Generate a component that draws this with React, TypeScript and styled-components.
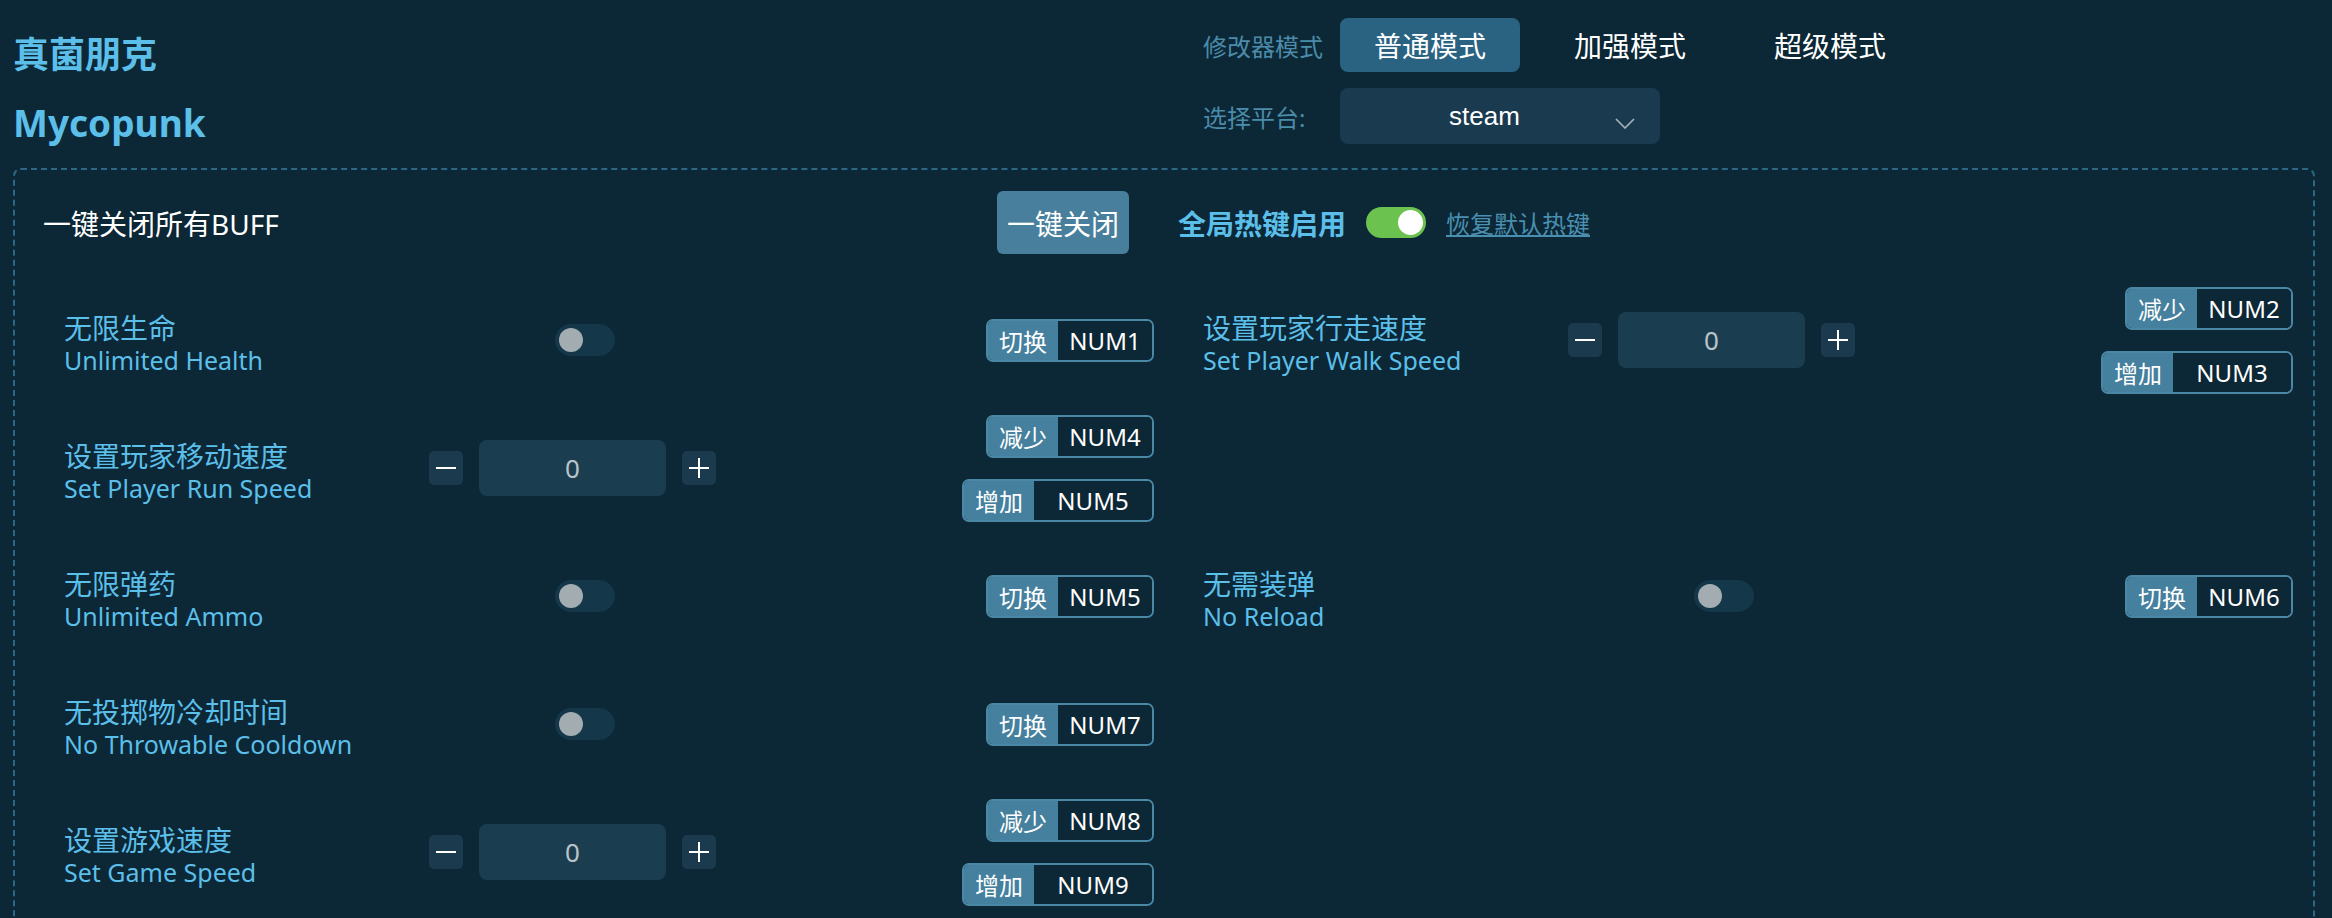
import React from 'react';
import styled, { createGlobalStyle } from 'styled-components';

const Global = createGlobalStyle`
  html, body { margin: 0; padding: 0; background: #0c2735; overflow: hidden; }
  body { font-family: "Noto Sans", "Noto Sans CJK SC", sans-serif; color: #fff; }
  * { box-sizing: border-box; }
`;

const Page = styled.div`
  width: 2332px;
  padding: 18px 17px 0 13px;
`;

const Header = styled.header`
  display: flex;
  align-items: flex-start;
`;

const TitleBlock = styled.div`
  width: 1190px;
  padding-top: 12px;
`;

const TitleCn = styled.h1`
  margin: 0;
  font-size: 36px;
  line-height: 50px;
  font-weight: 700;
  color: #5bbfe9;
`;

const TitleEn = styled.h2`
  margin: 18px 0 0;
  font-size: 37px;
  line-height: 50px;
  font-weight: 700;
  color: #5bbfe9;
`;

const Controls = styled.div`
  display: flex;
  flex-direction: column;
  gap: 16px;
`;

const ControlRow = styled.div`
  display: flex;
  align-items: center;
`;

const ControlLabel = styled.span`
  width: 137px;
  font-size: 24px;
  color: #4b8cab;
`;

const ModeGroup = styled.div`
  display: flex;
  gap: 20px;
`;

const ModeButton = styled.button<{ $active?: boolean }>`
  width: 180px;
  height: 54px;
  border: 0;
  border-radius: 8px;
  padding: 0;
  background: ${(p) => (p.$active ? '#2a6382' : 'transparent')};
  color: #fff;
  font-family: inherit;
  font-size: 28px;
`;

const Select = styled.div`
  width: 320px;
  height: 56px;
  border-radius: 8px;
  background: #1a3b4f;
  display: flex;
  align-items: center;
  padding: 0 25px 0 14px;
`;

const SelectText = styled.span`
  flex: 1;
  text-align: center;
  font-family: "Liberation Sans", Arial, sans-serif;
  font-size: 26px;
  color: #fff;
`;

const Chevron = styled.svg`
  margin-top: 14px;
`;

const Panel = styled.section`
  margin-top: 20px;
  border: 2px dashed #2c6886;
  border-radius: 8px;
  padding: 21px 20px 40px 28px;
`;

const TopRow = styled.div`
  display: grid;
  grid-template-columns: 1fr 1fr;
  column-gap: 28px;
  height: 63px;
`;

const TopLeft = styled.div`
  display: flex;
  align-items: center;
  justify-content: space-between;
  padding-right: 25px;
`;

const TopText = styled.span`
  font-size: 28px;
  color: #fff;
`;

const CloseButton = styled.button`
  height: 63px;
  padding: 0 10px;
  border: 0;
  border-radius: 6px;
  background: #487f9c;
  color: #fff;
  font-family: inherit;
  font-size: 28px;
`;

const TopRight = styled.div`
  display: flex;
  align-items: center;
  gap: 20px;
  margin-left: -4px;
`;

const HotkeyTitle = styled.span`
  font-size: 28px;
  font-weight: 700;
  color: #5bbfe9;
`;

const ResetLink = styled.a`
  font-size: 24px;
  color: #4a8fb0;
  text-decoration: underline;
`;

const Grid = styled.div`
  margin-top: 32px;
  display: grid;
  grid-template-columns: 1fr 1fr;
  column-gap: 28px;
  row-gap: 20px;
`;

const Item = styled.div`
  display: flex;
  align-items: center;
  min-height: 108px;
  padding-left: 21px;
`;

const Label = styled.div`
  width: 365px;
  padding-top: 6px;
  display: flex;
  flex-direction: column;
  color: #5bbfe9;
`;

const LabelCn = styled.span`
  font-size: 28px;
  line-height: 34px;
`;

const LabelEn = styled.span`
  font-size: 25px;
  line-height: 30px;
`;

const Track = styled.div<{ $on?: boolean }>`
  width: 60px;
  height: ${(p) => (p.$on ? 31 : 32)}px;
  border-radius: 16px;
  background: ${(p) => (p.$on ? '#6cc24f' : '#15374a')};
  display: flex;
  align-items: center;
  justify-content: ${(p) => (p.$on ? 'flex-end' : 'flex-start')};
  padding: 0 ${(p) => (p.$on ? 3 : 4)}px;
`;

const Knob = styled.div<{ $on?: boolean }>`
  width: ${(p) => (p.$on ? 25 : 24)}px;
  height: ${(p) => (p.$on ? 25 : 24)}px;
  border-radius: 50%;
  background: ${(p) => (p.$on ? '#ffffff' : '#a3acb1')};
`;

const ToggleSlot = styled.div`
  margin-left: 126px;
`;

const Stepper = styled.div`
  display: flex;
  align-items: center;
  gap: 16px;
`;

const StepButton = styled.div`
  width: 34px;
  height: 34px;
  border-radius: 5px;
  background: #1b3a4d;
  display: flex;
  align-items: center;
  justify-content: center;
`;

const StepValue = styled.div`
  width: 187px;
  height: 56px;
  border-radius: 8px;
  background: #1b3d50;
  display: flex;
  align-items: center;
  justify-content: center;
  font-size: 26px;
  color: #b9c3c9;
`;

const Keys = styled.div`
  margin-left: auto;
  display: flex;
  flex-direction: column;
  align-items: flex-end;
  gap: 21px;
`;

const Hotkey = styled.div`
  display: flex;
  height: 43px;
  border: 2px solid #4a88a6;
  border-radius: 7px;
  overflow: hidden;
`;

const KeyLabel = styled.span`
  width: 70px;
  background: #45809e;
  display: flex;
  align-items: center;
  justify-content: center;
  font-size: 24px;
  color: #fff;
`;

const KeyValue = styled.span<{ $wide?: boolean }>`
  width: ${(p) => (p.$wide ? 118 : 94)}px;
  background: #0c2735;
  display: flex;
  align-items: center;
  justify-content: center;
  font-size: 24px;
  color: #fff;
`;

type Row =
  | { kind: 'toggle'; cn: string; en: string; key: string }
  | { kind: 'number'; cn: string; en: string; dec: string; inc: string }
  | null;

const rows: Row[] = [
  { kind: 'toggle', cn: '无限生命', en: 'Unlimited Health', key: 'NUM1' },
  { kind: 'number', cn: '设置玩家行走速度', en: 'Set Player Walk Speed', dec: 'NUM2', inc: 'NUM3' },
  { kind: 'number', cn: '设置玩家移动速度', en: 'Set Player Run Speed', dec: 'NUM4', inc: 'NUM5' },
  null,
  { kind: 'toggle', cn: '无限弹药', en: 'Unlimited Ammo', key: 'NUM5' },
  { kind: 'toggle', cn: '无需装弹', en: 'No Reload', key: 'NUM6' },
  { kind: 'toggle', cn: '无投掷物冷却时间', en: 'No Throwable Cooldown', key: 'NUM7' },
  null,
  { kind: 'number', cn: '设置游戏速度', en: 'Set Game Speed', dec: 'NUM8', inc: 'NUM9' },
];

const Toggle = ({ on }: { on?: boolean }) => (
  <Track $on={on}>
    <Knob $on={on} />
  </Track>
);

const Minus = () => (
  <svg width="20" height="20" viewBox="0 0 20 20">
    <line x1="0" y1="10" x2="20" y2="10" stroke="#fff" strokeWidth="2" />
  </svg>
);

const Plus = () => (
  <svg width="20" height="20" viewBox="0 0 20 20">
    <line x1="0" y1="10" x2="20" y2="10" stroke="#fff" strokeWidth="2" />
    <line x1="10" y1="0" x2="10" y2="20" stroke="#fff" strokeWidth="2" />
  </svg>
);

const RowItem = ({ row }: { row: Row }) => {
  if (!row) return <Item />;
  return (
    <Item>
      <Label>
        <LabelCn>{row.cn}</LabelCn>
        <LabelEn>{row.en}</LabelEn>
      </Label>
      {row.kind === 'toggle' ? (
        <>
          <ToggleSlot>
            <Toggle />
          </ToggleSlot>
          <Keys>
            <Hotkey>
              <KeyLabel>切换</KeyLabel>
              <KeyValue>{row.key}</KeyValue>
            </Hotkey>
          </Keys>
        </>
      ) : (
        <>
          <Stepper>
            <StepButton>
              <Minus />
            </StepButton>
            <StepValue>0</StepValue>
            <StepButton>
              <Plus />
            </StepButton>
          </Stepper>
          <Keys>
            <Hotkey>
              <KeyLabel>减少</KeyLabel>
              <KeyValue>{row.dec}</KeyValue>
            </Hotkey>
            <Hotkey>
              <KeyLabel>增加</KeyLabel>
              <KeyValue $wide>{row.inc}</KeyValue>
            </Hotkey>
          </Keys>
        </>
      )}
    </Item>
  );
};

export default function App() {
  return (
    <Page>
      <Global />
      <Header>
        <TitleBlock>
          <TitleCn>真菌朋克</TitleCn>
          <TitleEn>Mycopunk</TitleEn>
        </TitleBlock>
        <Controls>
          <ControlRow>
            <ControlLabel>修改器模式</ControlLabel>
            <ModeGroup>
              <ModeButton $active>普通模式</ModeButton>
              <ModeButton>加强模式</ModeButton>
              <ModeButton>超级模式</ModeButton>
            </ModeGroup>
          </ControlRow>
          <ControlRow>
            <ControlLabel>选择平台:</ControlLabel>
            <Select>
              <SelectText>steam</SelectText>
              <Chevron width="20" height="11" viewBox="0 0 20 11">
                <polyline points="1,1 10,10 19,1" fill="none" stroke="#a9b3b8" strokeWidth="1.6" />
              </Chevron>
            </Select>
          </ControlRow>
        </Controls>
      </Header>
      <Panel>
        <TopRow>
          <TopLeft>
            <TopText>一键关闭所有BUFF</TopText>
            <CloseButton>一键关闭</CloseButton>
          </TopLeft>
          <TopRight>
            <HotkeyTitle>全局热键启用</HotkeyTitle>
            <Toggle on />
            <ResetLink>恢复默认热键</ResetLink>
          </TopRight>
        </TopRow>
        <Grid>
          {rows.map((r, i) => (
            <RowItem key={i} row={r} />
          ))}
        </Grid>
      </Panel>
    </Page>
  );
}
